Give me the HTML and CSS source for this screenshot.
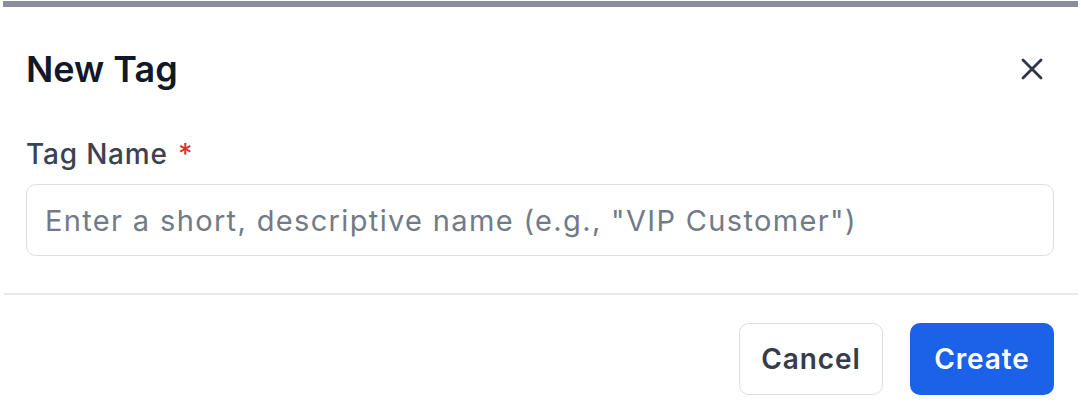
FILE: index.html
```html
<!DOCTYPE html>
<html>
<head>
  <title>New Tag</title>
  <meta name="viewport" content="width=device-width, initial-scale=1.0">
  <link rel="stylesheet" href="styles.css">
</head>
<body>
  <div class="top-bar"></div>
  <div class="modal">
    <div class="modal-header">
      <h2 class="modal-title">New Tag</h2>
      <button class="close-btn" title="Close">
        <svg width="24" height="24" viewBox="0 0 24 24" fill="none" stroke="currentColor" stroke-width="2.8" stroke-linecap="round">
          <path d="M3 3L21 21M21 3L3 21"/>
        </svg>
      </button>
    </div>
    <div class="modal-body">
      <label class="field-label" for="tagName">Tag Name <span class="required">*</span></label>
      <input type="text" id="tagName" class="text-input" placeholder="Enter a short, descriptive name (e.g., &quot;VIP Customer&quot;)">
    </div>
    <div class="modal-footer">
      <button class="btn btn-cancel">Cancel</button>
      <button class="btn btn-create">Create</button>
    </div>
  </div>
</body>
</html>
```

FILE: styles.css
```css
body {
  margin: 0;
  background-color: #ffffff;
  font-family: Inter, "Noto Sans", sans-serif;
}
.top-bar {
  height: 6px;
  margin: 1px 3px 0;
  background-color: #8a8e9a;
}
.modal-header {
  display: flex;
  justify-content: space-between;
  align-items: center;
  padding: 40px 27px 0 26px;
}
.modal-title {
  margin: 0;
  font-size: 36px;
  line-height: 44px;
  font-weight: 600;
  color: #111827;
}
.close-btn {
  border: none;
  background: none;
  padding: 0;
  margin-right: 10px;
  color: #2f3646;
  cursor: pointer;
  display: flex;
}
.modal-body {
  margin: 0 3px 0 4px;
  padding: 46px 24px 37px 22px;
  border-bottom: 2px solid #e8e9ec;
}
.field-label {
  display: block;
  font-size: 28px;
  line-height: 34px;
  font-weight: 500;
  letter-spacing: 0.8px;
  color: #3b4252;
}
.required {
  color: #d7352c;
  margin-left: 2px;
}
.text-input {
  display: block;
  box-sizing: border-box;
  width: 100%;
  height: 72px;
  margin-top: 13px;
  padding: 0 18px;
  border: 1.5px solid #dcdee3;
  border-radius: 10px;
  font-family: inherit;
  font-size: 29px;
  letter-spacing: 1.35px;
  color: #111827;
  outline: none;
}
.text-input::placeholder {
  color: #737a87;
}
.modal-footer {
  display: flex;
  justify-content: flex-end;
  gap: 27px;
  padding: 28px 27px 0;
}
.btn {
  height: 72px;
  width: 144px;
  border-radius: 10px;
  font-family: inherit;
  font-size: 28px;
  font-weight: 600;
  letter-spacing: 0.9px;
  cursor: pointer;
}
.btn-cancel {
  background-color: #ffffff;
  border: 1.5px solid #dcdee3;
  color: #363c4a;
}
.btn-create {
  background-color: #1b62e9;
  border: none;
  color: #ffffff;
}
```
